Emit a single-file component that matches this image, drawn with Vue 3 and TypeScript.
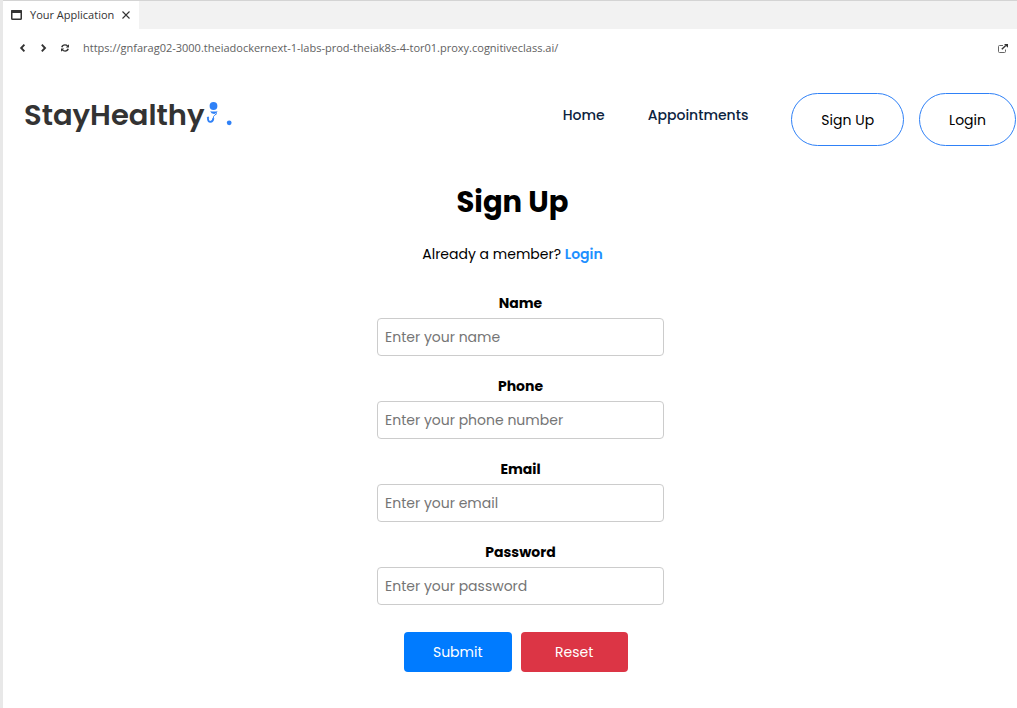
<script setup lang="ts">
import { reactive } from 'vue'

type FieldKey = 'name' | 'phone' | 'email' | 'password'

interface Field {
  key: FieldKey
  label: string
  type: string
  placeholder: string
}

const fields: Field[] = [
  { key: 'name', label: 'Name', type: 'text', placeholder: 'Enter your name' },
  { key: 'phone', label: 'Phone', type: 'tel', placeholder: 'Enter your phone number' },
  { key: 'email', label: 'Email', type: 'email', placeholder: 'Enter your email' },
  { key: 'password', label: 'Password', type: 'password', placeholder: 'Enter your password' },
]

const values = reactive<Record<FieldKey, string>>({ name: '', phone: '', email: '', password: '' })

function reset(): void {
  fields.forEach((field) => {
    values[field.key] = ''
  })
}
</script>

<template>
  <div class="window">
    <div class="tabs">
      <div class="tab">
        <svg class="tab-icon" width="11" height="10" viewBox="0 0 11 10" aria-hidden="true">
          <rect x="0.75" y="0.75" width="9.5" height="8.5" rx="0.8" fill="none" stroke="#333" stroke-width="1.5" />
          <rect x="0" y="0" width="11" height="3" rx="0.8" fill="#333" />
        </svg>
        <span class="tab-title">Your Application</span>
        <button class="icon-button" type="button" aria-label="Close tab">
          <svg width="8" height="8" viewBox="0 0 8 8" aria-hidden="true">
            <path d="M0.5 0.5 7.5 7.5M7.5 0.5 0.5 7.5" stroke="#333" stroke-width="1.1" />
          </svg>
        </button>
      </div>
    </div>

    <div class="toolbar">
      <button class="icon-button" type="button" aria-label="Back">
        <svg width="7" height="8" viewBox="0 0 7 8" aria-hidden="true">
          <path d="M5.4 0.7 2.2 4 5.4 7.3" fill="none" stroke="#333" stroke-width="1.9" />
        </svg>
      </button>
      <button class="icon-button" type="button" aria-label="Forward">
        <svg width="7" height="8" viewBox="0 0 7 8" aria-hidden="true">
          <path d="M1.8 0.7 5 4 1.8 7.3" fill="none" stroke="#333" stroke-width="1.9" />
        </svg>
      </button>
      <button class="icon-button" type="button" aria-label="Reload">
        <svg width="8" height="8" viewBox="0 0 8 8" aria-hidden="true">
          <path d="M0.8 3.2C1.3 1.6 2.5 0.9 3.9 0.9 5 0.9 6 1.4 6.6 2.1M7.2 4.8C6.7 6.4 5.5 7.1 4.1 7.1 3 7.1 2 6.6 1.4 5.9" fill="none" stroke="#333" stroke-width="1.4" />
          <path d="M8 0.2V3.4H4.8ZM0 7.8V4.6H3.2Z" fill="#333" />
        </svg>
      </button>
      <span class="address">https://gnfarag02-3000.theiadockernext-1-labs-prod-theiak8s-4-tor01.proxy.cognitiveclass.ai/</span>
      <button class="icon-button open" type="button" aria-label="Open in a new window">
        <svg width="10" height="9" viewBox="0 0 10 9" aria-hidden="true">
          <path d="M5 1.5H1.5Q0.5 1.5 0.5 2.5V7.5Q0.5 8.5 1.5 8.5H6.5Q7.5 8.5 7.5 7.5V5.5" fill="none" stroke="#666" stroke-width="1" />
          <path d="M3.8 5.2 7.8 1.4" stroke="#333" stroke-width="1.4" />
          <path d="M6 0H10V3.8Z" fill="#333" />
        </svg>
      </button>
    </div>

    <header class="header">
      <a class="brand" href="#">
        <span>StayHealthy</span>
        <svg class="brand-mark" width="28" height="26" viewBox="0 0 28 26" aria-hidden="true">
          <circle cx="8.5" cy="4" r="3.9" fill="#2f81f7" />
          <path d="M5.2 9.2Q9 10 12.6 9.2Q12 11.6 9.2 11.9Q6 11.8 5.2 9.2Z" fill="#2f81f7" />
          <path d="M2.9 15.4Q2.8 19.8 5.4 19.9Q8.1 19.7 8.4 16.2" fill="none" stroke="#2f81f7" stroke-width="1.8" />
          <path d="M8.3 16.6Q8.1 14.2 9.6 13.3L12 11.4" fill="none" stroke="#2f81f7" stroke-width="1" />
          <path d="M1.6 15.9 3.2 14.3 4.4 16.2Z" fill="#2f81f7" />
          <circle cx="24.2" cy="20.8" r="2.4" fill="#2f81f7" />
        </svg>
      </a>
      <nav class="nav">
        <a class="nav-link" href="#">Home</a>
        <a class="nav-link" href="#">Appointments</a>
        <div class="nav-actions">
          <button class="pill" type="button">Sign Up</button>
          <button class="pill" type="button">Login</button>
        </div>
      </nav>
    </header>

    <main class="main">
      <div class="intro">
        <h1>Sign Up</h1>
        <p>Already a member? <a href="#">Login</a></p>
      </div>
      <form class="form" novalidate @submit.prevent>
        <div v-for="field in fields" :key="field.key" class="field">
          <label :for="field.key">{{ field.label }}</label>
          <input :id="field.key" v-model="values[field.key]" :type="field.type" :placeholder="field.placeholder" />
        </div>
        <div class="actions">
          <button class="action submit" type="submit">Submit</button>
          <button class="action reset" type="button" @click="reset">Reset</button>
        </div>
      </form>
    </main>
  </div>
</template>

<style>
html {
  background: #fff;
}

body {
  margin: 0;
}
</style>

<style scoped>
.window {
  box-sizing: border-box;
  min-height: 100vh;
  border-left: 3px solid #e8e8e8;
  background: #fff;
  color: #000;
  font-family: Poppins, Inter, "Liberation Sans", sans-serif;
  font-size: 14px;
  line-height: 22px;
}

button,
input {
  font: inherit;
}

a {
  text-decoration: none;
}

svg {
  display: block;
}

.tabs {
  display: flex;
  border-top: 1px solid #d4d4d4;
  background: #f2f2f2;
}

.tab {
  display: flex;
  align-items: center;
  height: 28px;
  padding: 0 9px 0 8px;
  background: #fff;
}

.tab-title {
  margin: 0 8px;
  color: #333;
  font-family: "Segoe UI", "Open Sans", "Noto Sans", sans-serif;
  font-size: 11px;
  line-height: 16px;
}

.icon-button {
  padding: 0;
  border: 0;
  background: none;
}

.toolbar {
  display: flex;
  align-items: center;
  gap: 14px;
  height: 38px;
  padding: 0 9px 0 16px;
}

.address {
  color: #616161;
  font-family: "Segoe UI", "Open Sans", "Noto Sans", sans-serif;
  font-size: 11px;
  line-height: 16px;
}

.open {
  margin-left: auto;
}

.header {
  display: flex;
  justify-content: space-between;
  align-items: flex-start;
  padding: 26px 1px 0 21px;
}

.brand {
  display: flex;
  align-items: center;
  color: #333;
  font-size: 29px;
  font-weight: 600;
  line-height: 44px;
}

.nav {
  display: flex;
  gap: 43px;
}

.nav-link {
  color: #0c2340;
  font-weight: 500;
  line-height: 44px;
}

.nav-actions {
  display: flex;
  gap: 15px;
}

.pill {
  height: 53px;
  padding: 0 29px;
  border: 1px solid #2f81f7;
  border-radius: 27px;
  background: #fff;
  color: #000;
}

.main {
  display: flex;
  flex-direction: column;
  align-items: center;
  padding-top: 32px;
}

.intro {
  padding-left: 5px;
  text-align: center;
}

.intro h1 {
  margin: 0;
  font-size: 29px;
  font-weight: 700;
  line-height: 48px;
}

.intro p {
  margin: 17px 0 0;
}

.intro a {
  color: #1e90ff;
  font-weight: 600;
}

.form {
  display: flex;
  flex-direction: column;
  gap: 19px;
  width: 287px;
  max-width: 100%;
  padding: 27px 0 36px 21px;
}

.field {
  display: flex;
  flex-direction: column;
  gap: 4px;
}

.field label {
  font-weight: 700;
  text-align: center;
}

.field input {
  box-sizing: border-box;
  width: 100%;
  height: 38px;
  padding: 0 7px;
  border: 1px solid #ccc;
  border-radius: 4px;
  background: #fff;
}

.field input::placeholder {
  color: #757575;
  opacity: 1;
}

.actions {
  display: flex;
  gap: 9px;
  padding: 8px 36px 0 27px;
}

.action {
  flex: 1;
  height: 40px;
  padding: 0;
  border: 0;
  border-radius: 4px;
  color: #fff;
}

.submit {
  background: #007bff;
}

.reset {
  background: #dc3545;
}
</style>
